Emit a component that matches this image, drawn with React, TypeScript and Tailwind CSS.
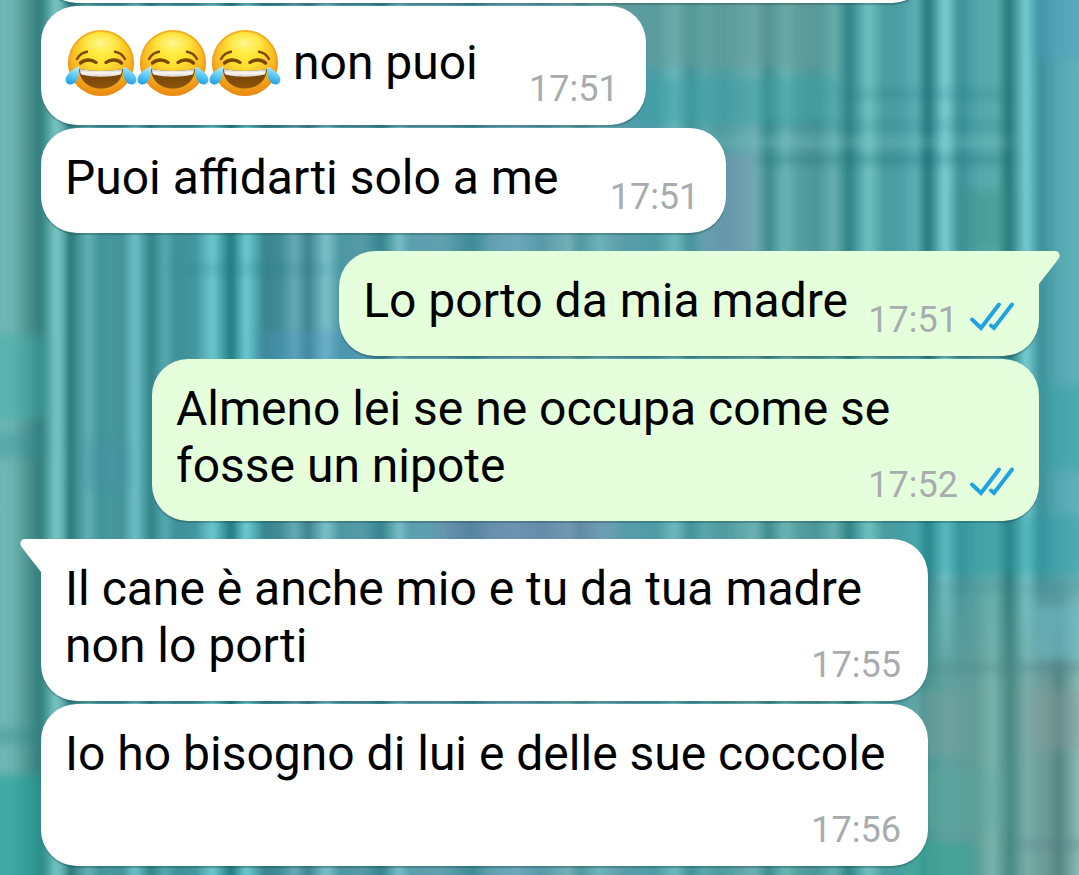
import type { ReactNode } from 'react';

type Stop = [number, string];

const weave: Stop[] = [
  [0, '#70b8b4'], [13, '#6cb3ae'], [28, '#4d918c'], [40, '#2d7775'], [45, '#3f8f8c'],
  [56, '#7dcbc7'], [63, '#5fb0ae'], [70, '#236e70'], [77, '#3f8c8e'], [88, '#62b2b3'],
  [100, '#3f9095'], [110, '#45969c'], [122, '#418f95'], [135, '#70c4c9'], [151, '#2c7d82'],
  [165, '#57aab0'], [175, '#3c8d95'], [195, '#41939c'], [213, '#6fccd2'], [231, '#197178'],
  [246, '#6fd0d6'], [256, '#4fa6ad'], [264, '#34818a'], [280, '#3d8890'], [295, '#66abb5'],
  [308, '#3a7c88'], [326, '#80c5ce'], [340, '#4a94a0'], [363, '#5598a5'], [382, '#2f7f8a'],
  [399, '#7cc0c8'], [410, '#5a9dac'], [443, '#619fae'], [472, '#3a8794'], [491, '#619fb0'],
  [516, '#6ea6ba'], [542, '#5898a8'], [568, '#78b0b8'], [580, '#4f959c'], [599, '#6fb3b9'],
  [623, '#5a9aa8'], [656, '#4b9aa4'], [675, '#70babd'], [690, '#3f9096'], [705, '#5ba6a9'],
  [722, '#4d989c'], [755, '#6eb0b1'], [768, '#3b8789'], [785, '#6bb6b4'], [800, '#549b9b'],
  [818, '#4a9498'], [834, '#66b1ae'], [849, '#2a7d80'], [868, '#74c4c2'], [884, '#489a9c'],
  [900, '#4a9ca2'], [916, '#5dafb2'], [928, '#1c7176'], [945, '#80d5d7'], [960, '#388e93'],
  [978, '#52a6a9'], [996, '#5bada9'], [1009, '#1f7072'], [1026, '#7cd2d6'], [1040, '#378d97'],
  [1058, '#55a7b1'], [1079, '#5fb2ba'],
];

const lowerRight: Stop[] = [
  [0, '#4f9995'], [28, '#659f9b'], [48, '#639b96'], [64, '#80b5ae'], [82, '#4a8880'],
  [98, '#78aaa4'], [118, '#739c97'], [131, '#547f7b'], [151, '#91bdb6'],
];

// x, y, width, height, colour, opacity
const tints: [number, number, number, number, string, number][] = [
  [600, -30, 230, 98, '#6b9d94', 0.45],
  [620, 78, 220, 46, '#36a0a4', 0.4],
  [700, 155, 55, 120, '#8094b8', 0.45],
  [1036, -30, 80, 90, '#4f9fc0', 0.4],
  [840, 90, 170, 8, '#1c747e', 0.25],
  [760, 122, 250, 7, '#1c747e', 0.25],
  [700, 138, 310, 8, '#80c4c8', 0.3],
  [760, 155, 250, 9, '#15666e', 0.3],
  [960, 190, 50, 60, '#39897a', 0.35],
  [-30, 335, 75, 85, '#42b0aa', 0.45],
  [-30, 432, 75, 26, '#2d8d99', 0.3],
  [80, 440, 50, 50, '#468fab', 0.3],
  [260, 330, 110, 40, '#4c95c4', 0.35],
  [180, 265, 150, 8, '#237880', 0.25],
  [440, 515, 170, 35, '#737da9', 0.45],
  [900, 515, 180, 60, '#299ba3', 0.4],
  [1040, 385, 60, 85, '#2e9e9e', 0.35],
  [-30, 775, 75, 130, '#21a19a', 0.6],
  [-30, 728, 75, 16, '#2f8585', 0.3],
];

const lowerTints: [number, number, number, number, string, number][] = [
  [910, 583, 190, 8, '#4b8389', 0.3],
  [1030, 605, 70, 55, '#6fbdcb', 0.5],
  [910, 663, 190, 9, '#467f83', 0.35],
  [1025, 690, 75, 60, '#8e9c9a', 0.35],
  [910, 690, 55, 65, '#7da09e', 0.4],
  [910, 770, 95, 60, '#58a99e', 0.35],
  [900, 842, 75, 60, '#34a493', 0.6],
  [1015, 840, 90, 10, '#527e82', 0.3],
];

function Stops({ list, span }: { list: Stop[]; span: number }) {
  return (
    <>
      {list.map(([x, color]) => (
        <stop key={x} offset={x / span} stopColor={color} />
      ))}
    </>
  );
}

function Wallpaper() {
  return (
    <svg
      aria-hidden="true"
      viewBox="0 0 1079 875"
      preserveAspectRatio="none"
      className="absolute inset-0 -z-10 h-full w-full"
    >
      <defs>
        <linearGradient id="weave" gradientUnits="userSpaceOnUse" x1="0" y1="0" x2="1079" y2="0">
          <Stops list={weave} span={1079} />
        </linearGradient>
        <linearGradient id="lower" gradientUnits="userSpaceOnUse" x1="928" y1="0" x2="1079" y2="0">
          <Stops list={lowerRight} span={151} />
        </linearGradient>
        <linearGradient id="fade" x1="0" y1="0" x2="0" y2="1">
          <stop offset="0" stopColor="#000" />
          <stop offset="0.1" stopColor="#777" />
          <stop offset="0.35" stopColor="#fff" />
          <stop offset="1" stopColor="#fff" />
        </linearGradient>
        <mask id="lowerMask" maskUnits="userSpaceOnUse" x="890" y="560" width="230" height="360">
          <rect x="890" y="566" width="230" height="340" fill="url(#fade)" />
        </mask>
        <filter id="thread" filterUnits="userSpaceOnUse" x="-60" y="-60" width="1200" height="1000">
          <feGaussianBlur stdDeviation="2 0" />
        </filter>
        <filter id="soft" filterUnits="userSpaceOnUse" x="-60" y="-60" width="1200" height="1000">
          <feGaussianBlur stdDeviation="9 5" />
        </filter>
      </defs>
      <rect x="-40" y="-40" width="1160" height="960" fill="url(#weave)" filter="url(#thread)" />
      <rect width="1079" height="875" fill="#66b4b6" opacity="0.1" />
      {tints.map(([x, y, w, h, fill, opacity]) => (
        <rect key={`${x} ${y}`} x={x} y={y} width={w} height={h} fill={fill} opacity={opacity} filter="url(#soft)" />
      ))}
      <g mask="url(#lowerMask)">
        <rect x="915" y="560" width="205" height="360" fill="url(#lower)" filter="url(#soft)" opacity="0.5" />
        <rect x="925" y="560" width="195" height="360" fill="url(#lower)" filter="url(#thread)" opacity="0.8" />
      </g>
      {lowerTints.map(([x, y, w, h, fill, opacity]) => (
        <rect key={`${x} ${y}`} x={x} y={y} width={w} height={h} fill={fill} opacity={opacity} filter="url(#soft)" />
      ))}
    </svg>
  );
}

function EmojiDefs() {
  return (
    <svg aria-hidden="true" className="absolute h-0 w-0">
      <defs>
        <radialGradient id="face" cx="0.5" cy="0.3" r="0.7">
          <stop offset="0" stopColor="#fff042" />
          <stop offset="0.35" stopColor="#fee032" />
          <stop offset="0.65" stopColor="#fbb921" />
          <stop offset="1" stopColor="#e88410" />
        </radialGradient>
        <radialGradient id="shine" cx="0.5" cy="0.5" r="0.5">
          <stop offset="0" stopColor="#fff9a8" stopOpacity="0.85" />
          <stop offset="1" stopColor="#fff36a" stopOpacity="0" />
        </radialGradient>
        <linearGradient id="mouth" x1="0" y1="0" x2="0" y2="1">
          <stop offset="0" stopColor="#6b3d05" />
          <stop offset="1" stopColor="#8d560b" />
        </linearGradient>
        <linearGradient id="teeth" x1="0" y1="0" x2="0" y2="1">
          <stop offset="0" stopColor="#c9c1ba" />
          <stop offset="0.5" stopColor="#fbf8f6" />
          <stop offset="1" stopColor="#d9cfc6" />
        </linearGradient>
        <linearGradient id="tear" x1="0.6" y1="0" x2="0.4" y2="1">
          <stop offset="0" stopColor="#b5ecfb" />
          <stop offset="0.5" stopColor="#5cc8f5" />
          <stop offset="1" stopColor="#219ee4" />
        </linearGradient>
      </defs>
    </svg>
  );
}

function JoyEmoji() {
  return (
    <svg role="img" aria-label="😂" viewBox="0 0 72 72" className="size-[72px] shrink-0">
      <circle cx="36" cy="36" r="33" fill="url(#face)" />
      <circle cx="36" cy="36" r="32" fill="none" stroke="#e9941f" strokeWidth="2" opacity="0.55" />
      <ellipse cx="36" cy="16" rx="22" ry="12" fill="url(#shine)" />
      <g fill="none" stroke="#7a4706" strokeLinecap="round">
        <path d="M12 32C14 28.500 17.500 25.500 22 24.800" strokeWidth="2.400" />
        <path d="M60 32C58 28.500 54.500 25.500 50 24.800" strokeWidth="2.400" />
        <path d="M15.500 36C19.500 32 26.500 32 31 35.500" strokeWidth="3.400" />
        <path d="M56.500 36C52.500 32 45.500 32 41 35.500" strokeWidth="3.400" />
      </g>
      <path d="M14 42C27 44.500 45 44.500 58 42C57.500 54 48 61.500 36 61.500S14.500 54 14 42Z" fill="url(#mouth)" />
      <path d="M15 42C27 44.500 45 44.500 57 42C57 44.500 56.500 46.200 55.800 47.500C44 50.500 28 50.500 16.200 47.500C15.500 46.200 15 44.500 15 42Z" fill="url(#teeth)" />
      <path d="M14 39.500C7.500 42 1.500 47 .7 51.500C0 55.500 2.600 57.800 5.800 57.500C12 56.900 14.800 48 14 39.500Z" fill="url(#tear)" />
      <path d="M58 39.500C64.500 42 70.500 47 71.300 51.500C72 55.500 69.400 57.800 66.200 57.500C60 56.900 57.200 48 58 39.500Z" fill="url(#tear)" />
    </svg>
  );
}

function ReadTicks() {
  return (
    <svg
      role="img"
      aria-label="Letto"
      viewBox="0 0 46 36"
      className="h-9 w-[46px]"
      fill="none"
      stroke="#1fa3e0"
      strokeWidth="4"
      strokeLinejoin="miter"
      strokeLinecap="round"
    >
      <path d="M3 20.500L12 29L30 5.500" />
      <path d="M22 26.500L25 29L43 5.500" />
    </svg>
  );
}

function Tail({ own }: { own?: boolean }) {
  return own ? (
    <svg aria-hidden="true" viewBox="0 0 22 36" className="absolute top-0 left-full -ml-px h-9 w-[22px]">
      <path d="M0 0H17C21.500 0 23 5 20 8.500L1 33H0Z" fill="#e5ffdc" />
    </svg>
  ) : (
    <svg aria-hidden="true" viewBox="0 0 22 36" className="absolute top-0 right-full -mr-px h-9 w-[22px]">
      <path d="M22 0H5C.500 0-1 5 2 8.500L21 33H22Z" fill="#fff" />
    </svg>
  );
}

type BubbleProps = {
  time: string;
  own?: boolean;
  tail?: boolean;
  wide?: boolean;
  children: ReactNode;
};

function Bubble({ time, own, tail, wide, children }: BubbleProps) {
  const side = own ? 'self-end bg-[#e5ffdc] pr-6' : 'self-start bg-white pr-[27px]';
  const corner = tail ? (own ? 'rounded-[36px] rounded-tr-none' : 'rounded-[36px] rounded-tl-none') : 'rounded-[36px]';
  const width = wide ? 'w-[887px]' : 'w-fit';
  const reserve = wide ? '' : own ? 'pr-[167px]' : 'pr-[141px]';
  return (
    <article
      className={`relative grid max-w-full pt-[21px] pb-[27px] pl-6 shadow-[0_2px_1px_rgba(20,60,60,0.3)] ${side} ${corner} ${width}`}
    >
      {tail && <Tail own={own} />}
      <div className={`col-start-1 row-start-1 text-[48px] leading-[57px] text-black ${reserve}`}>{children}</div>
      <div className="col-start-1 row-start-1 -mb-3 flex items-start gap-[11px] self-end justify-self-end">
        <time className="text-[36px] leading-[42px] text-[#a8acaf]">{time}</time>
        {own && <ReadTicks />}
      </div>
    </article>
  );
}

export default function App() {
  return (
    <main className="relative isolate flex min-h-screen flex-col overflow-hidden px-10 pb-[9px] pl-[41px] font-['Roboto',sans-serif]">
      <Wallpaper />
      <EmojiDefs />
      <div className="-mt-[69px] mb-[3px] h-[72px] w-[887px] max-w-full rounded-[36px] bg-white shadow-[0_2px_1px_rgba(20,60,60,0.3)]" />
      <section className="flex flex-col gap-[18px]">
        <div className="flex flex-col gap-[3px]">
          <Bubble time="17:51">
            <p className="flex h-[71px] items-center gap-3">
              <span className="flex">
                <JoyEmoji />
                <JoyEmoji />
                <JoyEmoji />
              </span>
              non puoi
            </p>
          </Bubble>
          <Bubble time="17:51">
            <p>Puoi affidarti solo a me</p>
          </Bubble>
        </div>
        <div className="flex flex-col gap-[3px]">
          <Bubble time="17:51" own tail>
            <p>Lo porto da mia madre</p>
          </Bubble>
          <Bubble time="17:52" own wide>
            <p>
              Almeno lei se ne occupa come se
              <br />
              fosse un nipote
            </p>
          </Bubble>
        </div>
        <div className="flex flex-col gap-[3px]">
          <Bubble time="17:55" tail wide>
            <p>
              Il cane è anche mio e tu da tua madre
              <br />
              non lo porti
            </p>
          </Bubble>
          <Bubble time="17:56" wide>
            <p className="min-h-[114px]">Io ho bisogno di lui e delle sue coccole</p>
          </Bubble>
        </div>
      </section>
    </main>
  );
}
